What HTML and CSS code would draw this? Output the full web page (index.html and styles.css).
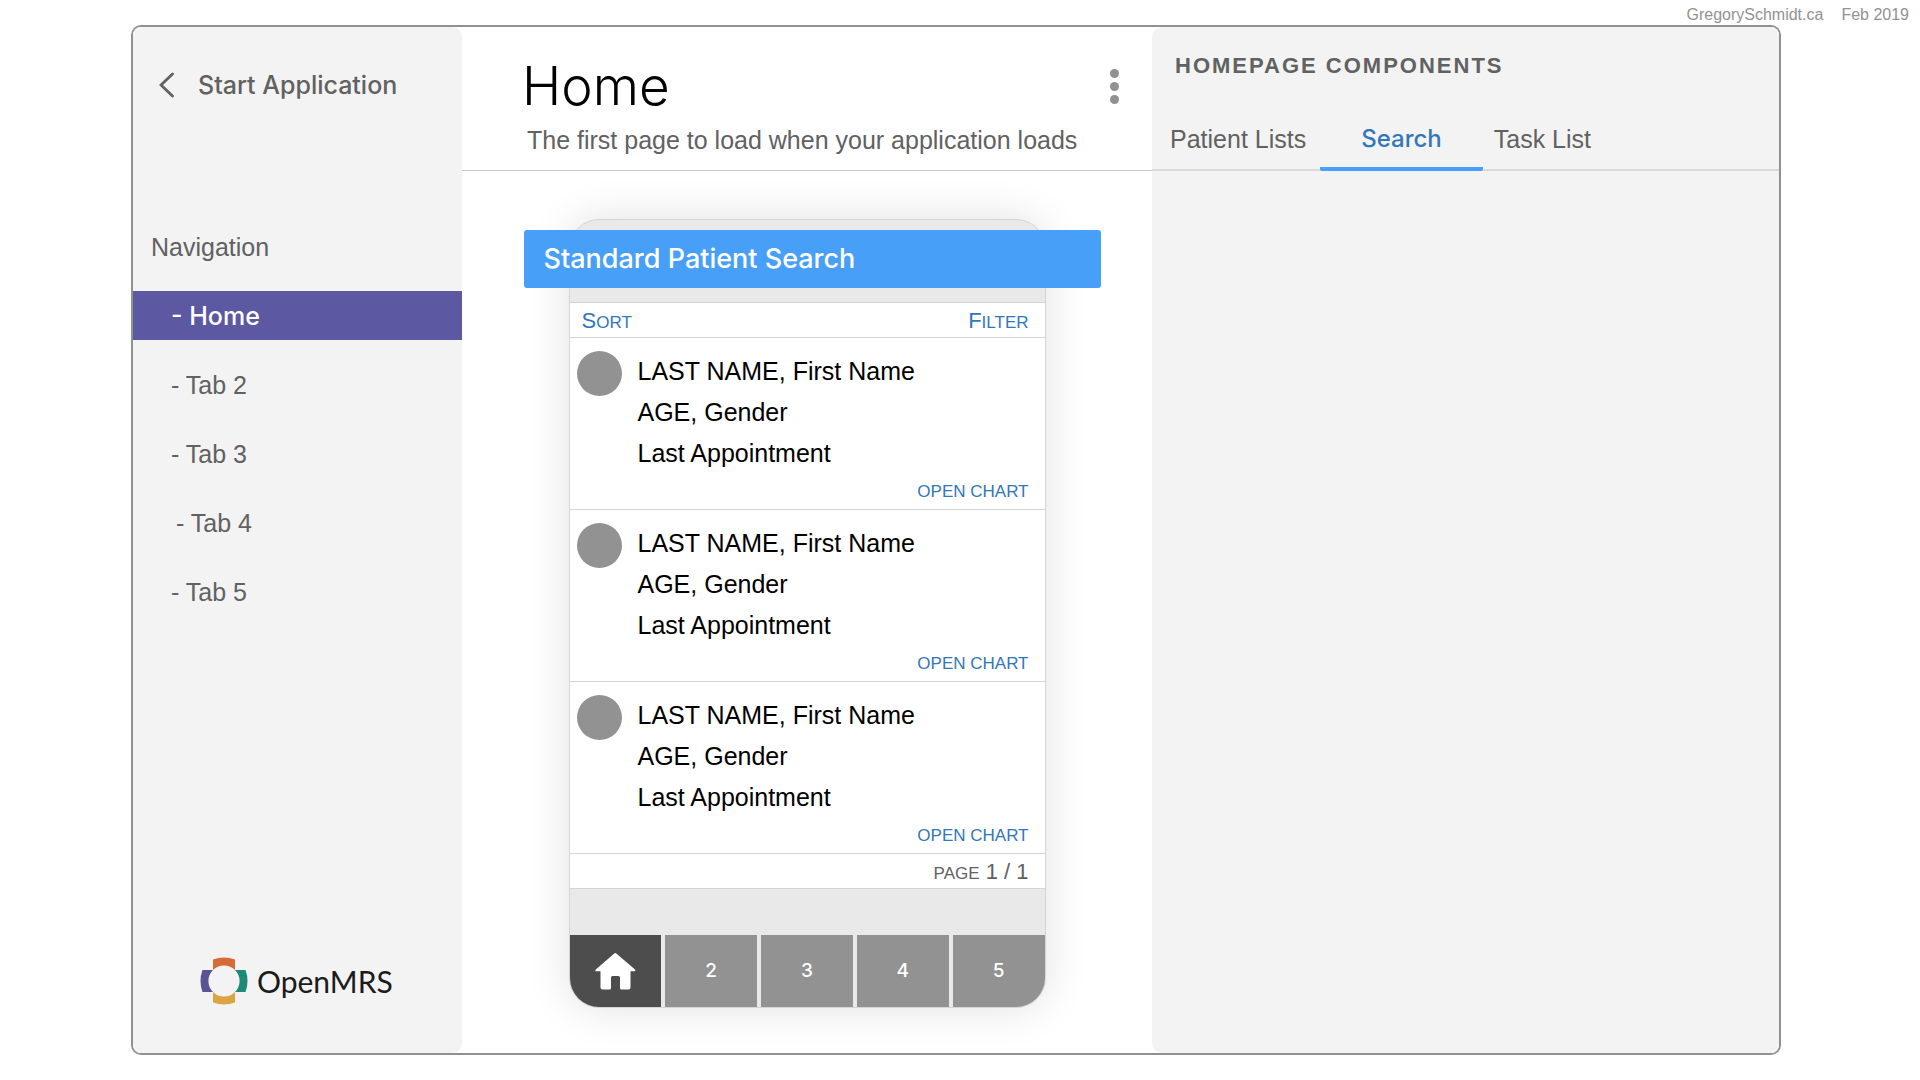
FILE: index.html
```html
<!DOCTYPE html>
<html lang="en">
<head>
<meta charset="utf-8">
<meta name="viewport" content="width=device-width, initial-scale=1">
<title>Start Application – Home</title>
<link rel="stylesheet" href="styles.css">
</head>
<body>
<header class="credit"><span>GregorySchmidt.ca</span><span>Feb 2019</span></header>
<div class="frame">
  <aside class="sidebar">
    <a class="back" href="#">
      <svg class="chevron" viewBox="0 0 15 26" aria-hidden="true"><path d="M13.500 2L2 13L13.500 24" fill="none" stroke="currentColor" stroke-width="2.800" stroke-linecap="round"/></svg>
      <span>Start Application</span>
    </a>
    <h2 class="nav-title">Navigation</h2>
    <nav class="nav">
      <a class="nav-item active" href="#">- Home</a>
      <a class="nav-item" href="#">- Tab 2</a>
      <a class="nav-item" href="#">- Tab 3</a>
      <a class="nav-item" href="#">&thinsp;- Tab 4</a>
      <a class="nav-item" href="#">- Tab 5</a>
    </nav>
    <div class="brand">
      <svg class="brand-mark" viewBox="-24 -24 48 48" aria-hidden="true">
        <path fill="#d66a38" d="M-11-21.500A32 32 0 0 1 11-21.500V-11A15.500 15.500 0 0 0-11-11Z"/>
        <path fill="#1d8a78" d="M21.500-11A32 32 0 0 1 21.500 11H11A15.500 15.500 0 0 0 11-11Z"/>
        <path fill="#dda445" d="M11 21.500A32 32 0 0 1-11 21.500V11A15.500 15.500 0 0 0 11 11Z"/>
        <path fill="#5b5493" d="M-21.500 11A32 32 0 0 1-21.500-11H-11A15.500 15.500 0 0 0-11 11Z"/>
      </svg>
      <span>OpenMRS</span>
    </div>
  </aside>

  <main class="main">
    <div class="main-head">
      <div>
        <h1>Home</h1>
        <p class="subtitle">The first page to load when your application loads</p>
      </div>
      <button class="more" type="button" aria-label="More options"><i></i><i></i><i></i></button>
    </div>
    <div class="stage">
      <div class="phone">
        <div class="list">
          <div class="list-tools">
            <button class="caps" type="button">S<small>ORT</small></button>
            <button class="caps" type="button">F<small>ILTER</small></button>
          </div>
          <article class="patient">
            <span class="avatar"></span>
            <div class="details"><p>LAST NAME, First Name</p><p>AGE, Gender</p><p>Last Appointment</p></div>
            <a class="open" href="#">OPEN CHART</a>
          </article>
          <article class="patient">
            <span class="avatar"></span>
            <div class="details"><p>LAST NAME, First Name</p><p>AGE, Gender</p><p>Last Appointment</p></div>
            <a class="open" href="#">OPEN CHART</a>
          </article>
          <article class="patient">
            <span class="avatar"></span>
            <div class="details"><p>LAST NAME, First Name</p><p>AGE, Gender</p><p>Last Appointment</p></div>
            <a class="open" href="#">OPEN CHART</a>
          </article>
          <p class="pager caps"><small>PAGE</small> 1 / 1</p>
        </div>
        <nav class="dock">
          <button class="current" type="button" aria-label="Home">
            <svg viewBox="0 0 41 37" aria-hidden="true"><path fill="#fff" d="M19 .7Q20.300-.5 21.600.7L40 16.600Q41 18.200 39.500 18.200H35.500V34.500Q35.500 36.500 33.500 36.500H26.500Q25 36.500 25 35V24.500Q25 23 23.500 23H17.500Q16 23 16 24.500V35Q16 36.500 14.500 36.500H7.500Q5.500 36.500 5.500 34.500V18.200H1.200Q-.3 18.200.8 16.600Z"/></svg>
          </button>
          <button type="button">2</button>
          <button type="button">3</button>
          <button type="button">4</button>
          <button type="button">5</button>
        </nav>
        <div class="banner">Standard Patient Search</div>
      </div>
    </div>
  </main>

  <aside class="components">
    <h2>HOMEPAGE COMPONENTS</h2>
    <nav class="tabs">
      <a href="#">Patient Lists</a>
      <a class="selected" href="#">Search</a>
      <a href="#">Task List</a>
    </nav>
  </aside>
</div>
</body>
</html>
```
FILE: styles.css
```css
*, *::before, *::after { box-sizing: border-box; }

body {
  margin: 0;
  min-height: 100vh;
  display: flex;
  flex-direction: column;
  background: #fff;
  color: #616161;
  font-family: "Liberation Sans", Arial, sans-serif;
  font-size: 25px;
  line-height: 28px;
}

h1, h2, p { margin: 0; font-weight: 400; font-size: inherit; }
a { color: inherit; text-decoration: none; }
button {
  margin: 0;
  padding: 0;
  border: 0;
  background: none;
  color: inherit;
  font: inherit;
  cursor: pointer;
}

.credit {
  display: flex;
  justify-content: flex-end;
  gap: 18px;
  height: 25px;
  padding: 5px 11px 0 0;
  color: #929292;
  font-size: 16px;
  line-height: 20px;
}

.frame {
  flex: 1;
  display: grid;
  grid-template-columns: 329px minmax(590px, 690fr) minmax(480px, 627fr);
  margin: 0 139px 25px 131px;
  border: 2px solid #919191;
  border-radius: 10px;
  overflow: hidden;
}

/* Sidebar */
.sidebar {
  display: flex;
  flex-direction: column;
  background: #f3f3f3;
  border-radius: 0 10px 10px 0;
}
.back {
  display: flex;
  align-items: center;
  gap: 24px;
  padding: 44px 0 0 26px;
  font-family: Inter, sans-serif;
  font-size: 25px;
  font-weight: 500;
}
.chevron { width: 15px; height: 26px; }
.nav-title { padding: 134px 18px 0; }
.nav {
  display: flex;
  flex-direction: column;
  gap: 20px;
  padding-top: 30px;
}
.nav-item { padding: 11px 38px 10px; }
.nav-item.active {
  background: #5c58a1;
  color: #fff;
  font-family: Inter, sans-serif;
  font-weight: 500;
}
.brand {
  display: flex;
  align-items: center;
  gap: 9px;
  margin-top: auto;
  padding: 0 0 48px 67px;
  color: #1b1b1b;
  font-family: Lato, sans-serif;
  font-size: 30px;
}
.brand-mark { width: 48px; height: 48px; }

/* Main column */
.main { display: flex; flex-direction: column; }
.main-head {
  display: flex;
  justify-content: space-between;
  align-items: flex-start;
  height: 144px;
  padding: 27px 33px 0 60px;
  border-bottom: 1px solid #c8c8c8;
}
.main-head h1 {
  color: #000;
  font-family: Inter, sans-serif;
  font-size: 53px;
  font-weight: 300;
  line-height: 64px;
}
.subtitle { padding: 8px 0 0 5px; }
.more {
  display: flex;
  flex-direction: column;
  gap: 4px;
  margin-top: 15px;
}
.more i {
  width: 9px;
  height: 9px;
  border-radius: 50%;
  background: #919191;
}

.stage {
  display: flex;
  justify-content: center;
  align-items: flex-start;
  padding: 48px 0 40px;
}
.phone {
  position: relative;
  display: flex;
  flex-direction: column;
  width: 477px;
  padding-top: 82px;
  border: 1px solid #d5d5d5;
  border-radius: 30px;
  background: #e9e9e9;
  box-shadow: 0 0 44px rgba(0, 0, 0, .12);
}
.banner {
  position: absolute;
  top: 10px;
  left: -46px;
  right: -56px;
  padding: 15px 20px;
  border-radius: 3px;
  background: #489ff8;
  color: #fff;
  font-family: Inter, sans-serif;
  font-size: 27px;
  font-weight: 500;
}

.list { background: #fff; border-bottom: 1px solid #d5d5d5; }
.list-tools {
  display: flex;
  justify-content: space-between;
  padding: 3px 16px 2px 12px;
  border-top: 1px solid #d5d5d5;
}
.caps { font-size: 22px; line-height: 29px; color: #3377b9; }
.caps small { font-size: 17px; line-height: 1; }
.patient {
  display: grid;
  grid-template-columns: 45px 1fr;
  column-gap: 16px;
  height: 172px;
  padding: 13px 16px 0 7px;
  border-top: 1px solid #d5d5d5;
}
.avatar {
  width: 45px;
  height: 45px;
  border-radius: 50%;
  background: #929292;
}
.details { color: #000; line-height: 41px; }
.open {
  grid-column: 2;
  justify-self: end;
  color: #3377b9;
  font-size: 17px;
  line-height: 24px;
}
.pager {
  padding: 3px 16px 2px;
  border-top: 1px solid #d5d5d5;
  color: #616161;
  text-align: right;
}

.dock {
  display: grid;
  grid-template-columns: repeat(5, 1fr);
  gap: 4px;
  margin-top: 46px;
  overflow: hidden;
  border-radius: 0 0 29px 29px;
}
.dock button {
  display: flex;
  align-items: center;
  justify-content: center;
  height: 72px;
  background: #929292;
  color: #fff;
  font-family: Inter, sans-serif;
  font-size: 19px;
  font-weight: 500;
}
.dock .current { background: #4d4d4d; }
.dock svg { width: 41px; height: 37px; }

/* Right panel */
.components { background: #f3f3f3; border-radius: 10px 0 0 10px; }
.components h2 {
  padding: 25px 23px 0;
  font-size: 22px;
  font-weight: 700;
  letter-spacing: 2px;
}
.tabs {
  display: flex;
  margin-top: 45px;
  border-bottom: 2px solid #d9d9d9;
}
.tabs a {
  height: 46px;
  margin-bottom: -2px;
  padding: 0 11px;
}
.tabs a:first-child { padding: 0 14px 0 18px; }
.tabs .selected {
  padding: 0 41px;
  border-bottom: 4px solid #489ff8;
  border-radius: 2px;
  color: #3377b9;
  font-family: Inter, sans-serif;
  font-size: 24px;
  font-weight: 500;
}
```
